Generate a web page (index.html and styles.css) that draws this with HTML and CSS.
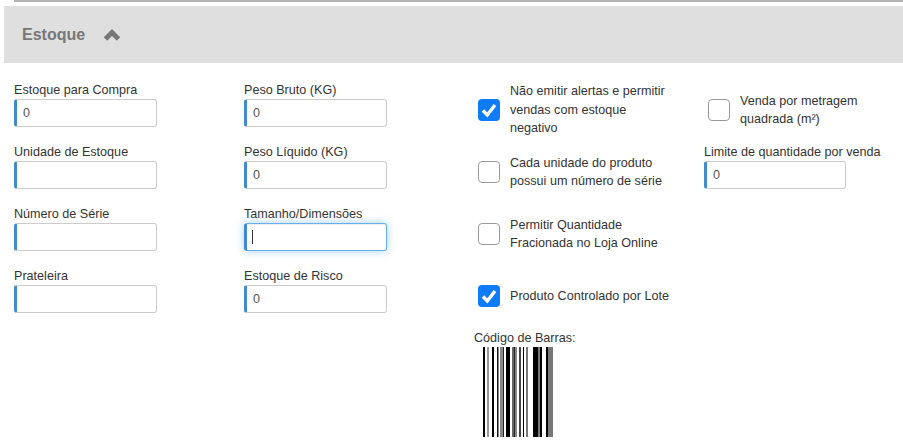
FILE: index.html
```html
<!DOCTYPE html>
<html lang="pt-BR">
<head>
<meta charset="utf-8">
<title>Estoque</title>
<link rel="stylesheet" href="styles.css">
</head>
<body>
<div class="top-strip"></div>
<div class="section-header">
  <h2 class="section-title">Estoque</h2>
  <svg class="chevron" width="18" height="12" viewBox="0 0 18 12"><path d="M2.500 10 L9 3.500 L15.500 10" fill="none" stroke="#777" stroke-width="4.800"/></svg>
</div>
<div class="form-grid">
  <div class="col">
    <div class="field"><label class="field-label">Estoque para Compra</label><input class="field-input" value="0"></div>
    <div class="field"><label class="field-label">Unidade de Estoque</label><input class="field-input"></div>
    <div class="field"><label class="field-label">Número de Série</label><input class="field-input"></div>
    <div class="field"><label class="field-label">Prateleira</label><input class="field-input"></div>
  </div>
  <div class="col">
    <div class="field"><label class="field-label">Peso Bruto (KG)</label><input class="field-input" value="0"></div>
    <div class="field"><label class="field-label">Peso Líquido (KG)</label><input class="field-input" value="0"></div>
    <div class="field"><label class="field-label">Tamanho/Dimensões</label><div class="input-wrap"><input class="field-input is-focused"><span class="caret"></span></div></div>
    <div class="field"><label class="field-label">Estoque de Risco</label><input class="field-input" value="0"></div>
  </div>
  <div class="col">
    <div class="check-row">
      <span class="box is-checked"><svg width="22" height="22" viewBox="0 0 22 22"><path d="M5 11.500 L9.300 16 L17 6" fill="none" stroke="#fff" stroke-width="3.400"/></svg></span>
      <span class="check-text">Não emitir alertas e permitir vendas com estoque negativo</span>
    </div>
    <div class="check-row">
      <span class="box"></span>
      <span class="check-text">Cada unidade do produto possui um número de série</span>
    </div>
    <div class="check-row">
      <span class="box"></span>
      <span class="check-text">Permitir Quantidade Fracionada no Loja Online</span>
    </div>
    <div class="check-row">
      <span class="box is-checked"><svg width="22" height="22" viewBox="0 0 22 22"><path d="M5 11.500 L9.300 16 L17 6" fill="none" stroke="#fff" stroke-width="3.400"/></svg></span>
      <span class="check-text">Produto Controlado por Lote</span>
    </div>
    <div class="barcode-label">Código de Barras:</div>
    <svg class="barcode" width="72" height="90" viewBox="0 0 72 90" shape-rendering="crispEdges">
      <rect x="0" width="2" height="90" fill="#000"/>
      <rect x="4" width="2" height="90" fill="#999"/>
      <rect x="9" width="2" height="90" fill="#000"/>
      <rect x="14" width="1" height="90" fill="#111"/>
      <rect x="15" width="1" height="90" fill="#888"/>
      <rect x="17" width="3" height="90" fill="#888"/>
      <rect x="20" width="1" height="90" fill="#222"/>
      <rect x="23" width="4" height="90" fill="#000"/>
      <rect x="29" width="2" height="90" fill="#666"/>
      <rect x="31" width="1" height="90" fill="#222"/>
      <rect x="32" width="2" height="90" fill="#888"/>
      <rect x="36" width="2" height="90" fill="#444"/>
      <rect x="40" width="1" height="90" fill="#000"/>
      <rect x="43" width="2" height="90" fill="#777"/>
      <rect x="50" width="5" height="90" fill="#000"/>
      <rect x="55" width="2" height="90" fill="#777"/>
      <rect x="57" width="2" height="90" fill="#000"/>
      <rect x="63" width="2" height="90" fill="#000"/>
      <rect x="65" width="5" height="90" fill="#777"/>
    </svg>
  </div>
  <div class="col">
    <div class="check-row">
      <span class="box"></span>
      <span class="check-text">Venda por metragem quadrada (m²)</span>
    </div>
    <div class="field"><label class="field-label">Limite de quantidade por venda</label><input class="field-input field-input-narrow" value="0"></div>
  </div>
</div>
</body>
</html>
```
FILE: styles.css
```css
* { box-sizing: border-box; }
html, body { margin: 0; padding: 0; background: #fff; overflow: hidden; }
body { font-family: "Liberation Sans", Arial, sans-serif; font-size: 12.600px; color: #333; height: 440px; }

.top-strip { height: 2px; margin-left: 14px; margin-bottom: 4px; background: #b3b3b3; }

.section-header {
  display: flex;
  align-items: center;
  height: 57px;
  margin-left: 4px;
  padding-left: 18px;
  background: #dfdfdf;
}
.section-title { margin: 0; font-size: 16px; font-weight: 700; color: #777; }
.chevron { margin-left: 18px; margin-top: 1px; }

.form-grid {
  display: grid;
  grid-template-columns: repeat(4, 230px);
  padding: 16px 0 0 14px;
}
.col { display: flex; flex-direction: column; min-width: 0; }

.field { height: 62px; }
.field-label { display: block; height: 20px; line-height: 22px; white-space: nowrap; }
.input-wrap { position: relative; width: 143px; }
.field-input {
  display: block;
  width: 143px;
  height: 28px;
  padding: 0 6px;
  border: 1px solid #ccc;
  border-left: 3px solid #428bca;
  border-radius: 3px;
  outline: 0;
  background: #fff;
  color: #555;
  font: 12.600px "Liberation Sans", Arial, sans-serif;
}
.field-input-narrow { width: 142px; }
.field-input.is-focused {
  border-color: #66afe9;
  border-left-color: #428bca;
  box-shadow: inset 0 1px 1px rgba(0,0,0,.075), 0 0 8px rgba(102,175,233,.6);
}
.caret { position: absolute; left: 8px; top: 7px; width: 1px; height: 14px; background: #333; }

.check-row { display: flex; align-items: center; gap: 10px; height: 62px; padding-left: 4px; }
.box {
  flex: none;
  width: 22px;
  height: 22px;
  border: 1px solid #999;
  border-radius: 4px;
  background: #fff;
}
.box.is-checked { border: 0; background: #0d7bfb; }
.box svg { display: block; }
.check-text { width: 160px; line-height: 18.500px; }

.barcode-label { height: 20px; margin-top: 1px; line-height: 20px; }
.barcode { display: block; margin-left: 9px; margin-top: -1px; }
```
